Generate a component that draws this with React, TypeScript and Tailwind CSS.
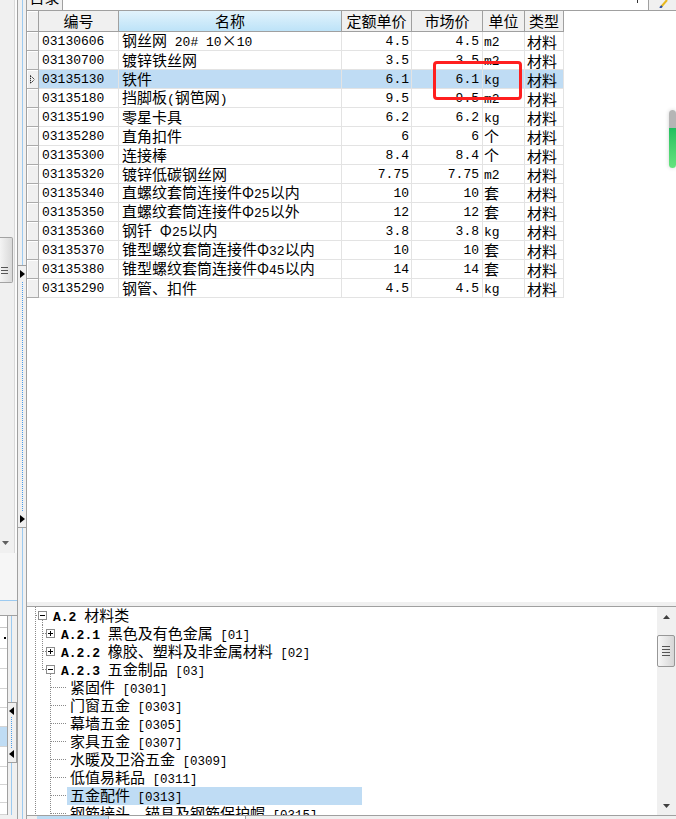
import React from 'react';

type Row = { code: string; name: string; quota: string; market: string; unit: string; kind: string };

const rows: Row[] = [
  { code: '03130606', name: '钢丝网 20# 10×10', quota: '4.5', market: '4.5', unit: 'm2', kind: '材料' },
  { code: '03130700', name: '镀锌铁丝网', quota: '3.5', market: '3.5', unit: 'm2', kind: '材料' },
  { code: '03135130', name: '铁件', quota: '6.1', market: '6.1', unit: 'kg', kind: '材料' },
  { code: '03135180', name: '挡脚板(钢笆网)', quota: '9.5', market: '9.5', unit: 'm2', kind: '材料' },
  { code: '03135190', name: '零星卡具', quota: '6.2', market: '6.2', unit: 'kg', kind: '材料' },
  { code: '03135280', name: '直角扣件', quota: '6', market: '6', unit: '个', kind: '材料' },
  { code: '03135300', name: '连接棒', quota: '8.4', market: '8.4', unit: '个', kind: '材料' },
  { code: '03135320', name: '镀锌低碳钢丝网', quota: '7.75', market: '7.75', unit: 'm2', kind: '材料' },
  { code: '03135340', name: '直螺纹套筒连接件Φ25以内', quota: '10', market: '10', unit: '套', kind: '材料' },
  { code: '03135350', name: '直螺纹套筒连接件Φ25以外', quota: '12', market: '12', unit: '套', kind: '材料' },
  { code: '03135360', name: '钢钎 Φ25以内', quota: '3.8', market: '3.8', unit: 'kg', kind: '材料' },
  { code: '03135370', name: '锥型螺纹套筒连接件Φ32以内', quota: '10', market: '10', unit: '套', kind: '材料' },
  { code: '03135380', name: '锥型螺纹套筒连接件Φ45以内', quota: '14', market: '14', unit: '套', kind: '材料' },
  { code: '03135290', name: '钢管、扣件', quota: '4.5', market: '4.5', unit: 'kg', kind: '材料' },
];

const SELECTED = 2;

const cjk = "font-['Noto_Sans_CJK_SC',sans-serif] text-[15px]";
const mono = "font-['Liberation_Mono',monospace]";

// ascii runs in a narrow mono face, the rest in the CJK face (SimSun-ish widths)
const Mixed = ({ text, latin }: { text: string; latin: string }) => (
  <>
    {text
      .split(/([\x20-\x7e]+)/)
      .filter(Boolean)
      .map((part, i) =>
        /^[\x20-\x7e]+$/.test(part) ? (
          <span key={i} className={`inline-block leading-[17px] ${mono} ${latin}`}>{part}</span>
        ) : (
          <span key={i} className={`inline-block leading-[17px] ${cjk}`}>{part}</span>
        )
      )}
  </>
);

const RightArrow = () => (
  <svg width="5" height="8" viewBox="0 0 5 8" className="block">
    <polygon points="0,0 5,4 0,8" fill="#000" />
  </svg>
);

const LeftArrow = () => (
  <svg width="5" height="8" viewBox="0 0 5 8" className="block">
    <polygon points="5,0 0,4 5,8" fill="#000" />
  </svg>
);

const LeftStrip = () => (
  <div className="w-[17px] shrink-0 flex flex-col">
    <div className="h-[553px] flex">
      <div className="w-[14px] bg-[#f0f0f0] flex flex-col">
        <div className="h-[237px]" />
        <div className="h-[46px] w-[13px] rounded-r-[2px] border border-l-0 border-[#a3a3a3] bg-gradient-to-r from-[#f4f4f4] to-[#d9d9d9] flex flex-col justify-end pb-[8px] pl-[1px] gap-[2px]">
          <div className="w-[7px] h-px bg-[#555]" />
          <div className="w-[7px] h-px bg-[#555]" />
          <div className="w-[7px] h-px bg-[#555]" />
        </div>
        <div className="flex-1" />
        <div className="h-[18px] pt-[6px] pl-[2px]">
          <svg width="7" height="4" viewBox="0 0 7 4" className="block">
            <polygon points="0,0 7,0 3.5,4" fill="#606060" />
          </svg>
        </div>
      </div>
      <div className="w-px bg-[#d9d9d9]" />
      <div className="w-[2px] bg-[#fbfbfb]" />
    </div>
    <div className="h-[47px] bg-[#f6f6f6]" />
    <div className="h-px bg-[#9ccaf0]" />
    <div className="h-[14px] bg-[#f0f0f0]" />
    <div className="flex-1 flex border-t border-[#a0a0a0]">
      <div className="w-[7px] bg-white flex flex-col">
        <div className="h-[12px] border-b border-[#c8c8c8]" />
        {[21, 20, 20, 19, 19, 20, 20, 18, 18, 12].map((h, i) => (
          <div
            key={i}
            style={{ height: h }}
            className={`border-b border-[#d4d4d4] ${i === 5 ? 'bg-[#bfdcf4]' : ''} ${i === 0 ? 'flex items-center justify-end pr-[1px]' : ''}`}
          >
            {i === 0 && <div className="w-[2px] h-[2px] bg-black" />}
          </div>
        ))}
      </div>
      <div className="w-[10px] bg-[#f0f0f0] border-l border-[#a0a0a0] flex flex-col">
        <div className="h-[86px] ml-[3px] w-px bg-[#9ccaf0]" />
        <div className="h-[61px] border-y border-r border-[#a0a0a0] flex flex-col items-start pl-[1px]">
          <div className="pt-[4px]"><LeftArrow /></div>
          <div className="flex-1 ml-[2px] border-l border-dotted border-[#4a9be8] my-[2px]" />
          <div className="pb-[4px]"><LeftArrow /></div>
        </div>
        <div className="flex-1 ml-[3px] w-px bg-[#9ccaf0]" />
      </div>
    </div>
    <div className="h-[4px] bg-[#f0f0f0]" />
  </div>
);

const Splitter = () => (
  <div className="w-[9px] shrink-0 border-l border-[#a0a0a0] bg-[#f0f0f0] flex flex-col">
    <div className="h-[265px] ml-[4px] w-px bg-[#9ccaf0]" />
    <div className="h-[263px] border-y border-[#a0a0a0] flex flex-col items-start pl-[2px]">
      <div className="pt-[4px]"><RightArrow /></div>
      <div className="flex-1 ml-[2px] my-[4px] border-l border-dotted border-[#4a9be8]" />
      <div className="pb-[4px]"><RightArrow /></div>
    </div>
    <div className="flex-1 ml-[4px] w-px bg-[#9ccaf0]" />
  </div>
);

const Toolbar = () => (
  <div className="h-[11px] shrink-0 flex border-b border-[#a0a0a0]">
    <div className="w-[36px] bg-[#f0f0f0] border-r border-[#a0a0a0] overflow-hidden">
      <div className={`${cjk} leading-[15px] -mt-[11px] text-center`}>目录</div>
    </div>
    <div className="flex-1" />
    <div className="w-px h-[3px] bg-[#333] mr-[10px]" />
    <div className="w-[28px] bg-[#f0f0f0] border-l border-[#a0a0a0] pl-[10px]">
      <svg width="10" height="8" viewBox="0 0 10 8" className="block">
        <line x1="2" y1="7" x2="8" y2="0" stroke="#e8b820" strokeWidth="2" />
        <line x1="1" y1="8" x2="3" y2="6" stroke="#2a4fa8" strokeWidth="2" />
      </svg>
    </div>
  </div>
);

const cols = {
  ind: 'w-[12px]',
  code: 'w-[80px]',
  name: 'w-[223px]',
  quota: 'w-[70px]',
  market: 'w-[71px]',
  unit: 'w-[42px]',
  kind: 'w-[39px]',
};

const headCell = 'h-full shrink-0 border-r border-b border-[#a0a0a0] flex items-center justify-center leading-[18px]';
const cell = 'h-full shrink-0 border-r border-b border-[#e3e3e3] flex items-center leading-[17px] whitespace-pre';

const Grid = () => (
  <div className="shrink-0 flex flex-col">
    <div className="h-[21px] flex">
      <div className={`${headCell} ${cols.ind} bg-[#f0f0f0] shadow-[inset_1px_1px_0_#fff]`} />
      <div className={`${headCell} ${cols.code} bg-[#f0f0f0] ${cjk}`}>编号</div>
      <div className={`${headCell} ${cols.name} bg-gradient-to-b from-[#e2f3fc] to-[#bde3f8] ${cjk}`}>名称</div>
      <div className={`${headCell} ${cols.quota} bg-[#f0f0f0] ${cjk}`}>定额单价</div>
      <div className={`${headCell} ${cols.market} bg-[#f0f0f0] ${cjk}`}>市场价</div>
      <div className={`${headCell} ${cols.unit} bg-[#f0f0f0] ${cjk}`}>单位</div>
      <div className={`${headCell} ${cols.kind} bg-[#f0f0f0] ${cjk}`}>类型</div>
    </div>
    {rows.map((r, i) => {
      const sel = i === SELECTED ? 'bg-[#bfdcf4]' : '';
      return (
        <div key={r.code} className="h-[19px] flex">
          <div className={`h-full shrink-0 ${cols.ind} bg-[#f0f0f0] border-r border-b border-[#ababab] shadow-[inset_1px_1px_0_#fff] flex items-center pl-[3px]`}>
            {i === SELECTED && (
              <svg width="5" height="9" viewBox="0 0 5 9" className="block">
                <polygon points="0.5,0.5 4.5,4.5 0.5,8.5" fill="none" stroke="#000" strokeWidth="1" strokeDasharray="1 1" />
              </svg>
            )}
          </div>
          <div className={`${cell} ${cols.code} ${sel} pl-[3px] ${mono} text-[13px]`}>{r.code}</div>
          <div className={`${cell} ${cols.name} ${sel} pl-[3px]`}>
            <div><Mixed text={r.name} latin="text-[13px]" /></div>
          </div>
          <div className={`${cell} ${cols.quota} ${sel} justify-end pr-[2px] ${mono} text-[13px]`}>{r.quota}</div>
          <div className={`${cell} ${cols.market} ${sel} justify-end pr-[3px] ${mono} text-[13px]`}>{r.market}</div>
          <div className={`${cell} ${cols.unit} ${sel} pl-[1px]`}>
            <div><Mixed text={r.unit} latin="text-[13px]" /></div>
          </div>
          <div className={`${cell} ${cols.kind} ${sel} pl-[2px] ${cjk}`}>{r.kind}</div>
        </div>
      );
    })}
  </div>
);

const dot = { stroke: '#8a8a8a', strokeDasharray: '1 1' } as const;

const Box = ({ x, open }: { x: number; open: boolean }) => (
  <>
    <rect x={x + 0.5} y="4.5" width="8" height="8" fill="#fff" stroke="#8c8c8c" />
    <line x1={x + 2} y1="8.5" x2={x + 7} y2="8.5" stroke="#000" />
    {!open && <line x1={x + 4.5} y1="6" x2={x + 4.5} y2="11" stroke="#000" />}
  </>
);

type TreeItem =
  | { level: 0; code: string; label: string }
  | { level: 1; code: string; label: string; open: boolean; last: boolean }
  | { level: 2; label: string; selected?: boolean };

const treeItems: TreeItem[] = [
  { level: 0, code: 'A.2', label: '材料类' },
  { level: 1, code: 'A.2.1', label: '黑色及有色金属 [01]', open: false, last: false },
  { level: 1, code: 'A.2.2', label: '橡胶、塑料及非金属材料 [02]', open: false, last: false },
  { level: 1, code: 'A.2.3', label: '五金制品 [03]', open: true, last: true },
  { level: 2, label: '紧固件 [0301]' },
  { level: 2, label: '门窗五金 [0303]' },
  { level: 2, label: '幕墙五金 [0305]' },
  { level: 2, label: '家具五金 [0307]' },
  { level: 2, label: '水暖及卫浴五金 [0309]' },
  { level: 2, label: '低值易耗品 [0311]' },
  { level: 2, label: '五金配件 [0313]', selected: true },
  { level: 2, label: '钢筋接头、锚具及钢筋保护帽 [0315]' },
];

const codeCls = `inline-block leading-[17px] ${mono} text-[13px] font-bold`;

const TreeRow = ({ item }: { item: TreeItem }) => {
  if (item.level === 0) {
    return (
      <div className="h-[18px] shrink-0 flex items-center leading-[17px] whitespace-pre">
        <svg width="25" height="18" shapeRendering="crispEdges" className="block shrink-0">
          <line x1="8.5" y1="0" x2="8.5" y2="18" {...dot} />
          <line x1="9" y1="8.5" x2="11" y2="8.5" {...dot} />
          <Box x={11} open />
          <line x1="15.5" y1="13" x2="15.5" y2="18" {...dot} />
        </svg>
        <div className="pl-[1px]">
          <span className={codeCls}>{item.code} </span>
          <span className={`inline-block leading-[17px] ${cjk}`}>{item.label}</span>
        </div>
      </div>
    );
  }
  if (item.level === 1) {
    return (
      <div className="h-[18px] shrink-0 flex items-center leading-[17px] whitespace-pre">
        <svg width="33" height="18" shapeRendering="crispEdges" className="block shrink-0">
          <line x1="8.5" y1="0" x2="8.5" y2="18" {...dot} />
          <line x1="15.5" y1="0" x2="15.5" y2={item.last ? 9 : 18} {...dot} />
          <line x1="16" y1="8.5" x2="19" y2="8.5" {...dot} />
          <Box x={19} open={item.open} />
          {item.open && <line x1="23.5" y1="13" x2="23.5" y2="18" {...dot} />}
        </svg>
        <div className="pl-[1px]">
          <span className={codeCls}>{item.code} </span>
          <Mixed text={item.label} latin="text-[12.5px]" />
        </div>
      </div>
    );
  }
  return (
    <div className="h-[18px] shrink-0 flex items-center leading-[17px] whitespace-pre">
      <svg width="40" height="18" shapeRendering="crispEdges" className="block shrink-0">
        <line x1="8.5" y1="0" x2="8.5" y2="18" {...dot} />
        <line x1="23.5" y1="0" x2="23.5" y2="18" {...dot} />
        <line x1="24" y1="8.5" x2="40" y2="8.5" {...dot} />
      </svg>
      <div className={`h-[18px] w-[295px] pl-[3px] flex items-center ${item.selected ? 'bg-[#bfdcf4]' : ''}`}>
        <div>
          <Mixed text={item.label} latin="text-[12.5px]" />
        </div>
      </div>
    </div>
  );
};

const TreeScroll = () => (
  <div className="w-[19px] shrink-0 bg-[#f0f0f0] flex flex-col">
    <div className="h-[19px] flex items-center justify-center">
      <svg width="7" height="4" viewBox="0 0 7 4" className="block">
        <polygon points="3.5,0 7,4 0,4" fill="#404040" />
      </svg>
    </div>
    <div className="h-[9px]" />
    <div className="h-[32px] w-[18px] rounded-[2px] border border-[#979797] bg-gradient-to-r from-[#f7f7f7] to-[#d6d6d6] flex flex-col justify-center items-center gap-[2px]">
      <div className="w-[8px] h-px bg-[#555]" />
      <div className="w-[8px] h-px bg-[#555]" />
      <div className="w-[8px] h-px bg-[#555]" />
      <div className="w-[8px] h-px bg-[#555]" />
    </div>
    <div className="flex-1" />
    <div className="h-[19px] flex items-center justify-center">
      <svg width="7" height="4" viewBox="0 0 7 4" className="block">
        <polygon points="0,0 7,0 3.5,4" fill="#404040" />
      </svg>
    </div>
  </div>
);

const Tree = () => (
  <div className="h-[209px] shrink-0 flex border-t border-[#a0a0a0] overflow-hidden">
    <div className="flex-1 min-w-0 flex flex-col overflow-hidden">
      {treeItems.map((item, i) => (
        <TreeRow key={i} item={item} />
      ))}
    </div>
    <TreeScroll />
  </div>
);

const BottomStrip = () => (
  <div className="h-[4px] shrink-0 flex bg-[#f0f0f0] border-t border-[#a0a0a0]">
    <div className="w-[10px]" />
    <div className="w-[71px] bg-[#bcdcf4]" />
    <div className="w-[138px] bg-white border-x border-[#a0a0a0]" />
  </div>
);

export default function App() {
  return (
    <div className="relative w-[676px] h-[819px] overflow-hidden bg-white flex text-black">
      <LeftStrip />
      <Splitter />
      <div className="flex-1 min-w-0 flex flex-col border-l border-[#a0a0a0]">
        <Toolbar />
        <Grid />
        <div className="flex-1" />
        <div className="h-[4px] shrink-0 bg-[#f0f0f0]" />
        <Tree />
        <BottomStrip />
      </div>

      {/* red annotation box */}
      <div className="absolute left-[433px] top-[61px] w-[89px] h-[39px] border-[3px] border-[#ff1f1f] rounded-[4px]" />

      {/* floating green level indicator */}
      <div className="absolute left-[669px] top-[110px] w-[7px] h-[58px] rounded-[4px] overflow-hidden flex flex-col shadow-[0_0_4px_rgba(0,0,0,0.18)]">
        <div className="h-[18px] bg-[#b5b5b5]" />
        <div className="flex-1 bg-gradient-to-b from-[#1fbf5f] to-[#66e47f]" />
      </div>
    </div>
  );
}
